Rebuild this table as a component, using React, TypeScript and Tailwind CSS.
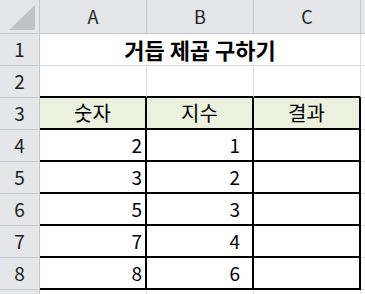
import React from 'react';

const COLS = ['A', 'B', 'C'];

const DATA: [number, number][] = [
  [2, 1],
  [3, 2],
  [5, 3],
  [7, 4],
  [8, 6],
];

const font = { fontFamily: '"Noto Sans CJK KR", "Noto Sans", sans-serif' };

const App: React.FC = () => {
  return (
    <div
      className="w-screen h-screen overflow-hidden bg-white text-black grid grid-cols-[40px_107px_107px_107px_1fr] grid-rows-[34px_repeat(8,32px)_1fr]"
      style={font}
    >
      {/* Corner */}
      <div className="bg-[#e4e6e9] border-r border-b border-[#c4c7cb] relative">
        <svg className="absolute left-0 top-0" width="40" height="34" viewBox="0 0 40 34">
          <polygon points="9,30 35,30 35,5" fill="#bfc2c6" />
        </svg>
      </div>

      {/* Column headers */}
      {COLS.map(c => (
        <div
          key={c}
          className="bg-[#e4e6e9] border-r border-b border-[#c4c7cb] flex items-center justify-center text-[18px] text-[#222]"
        >
          {c}
        </div>
      ))}
      <div className="bg-[#e4e6e9] border-b border-[#c4c7cb]" />

      {/* Row 1: title */}
      <div className="bg-[#e4e6e9] border-r border-b border-[#c4c7cb] flex items-center justify-center text-[19px] text-[#222]">1</div>
      <div className="col-span-3 border-r border-b border-[#dadada] flex items-center justify-center text-[22px] font-bold">
        거듭 제곱 구하기
      </div>
      <div className="border-b border-[#dadada]" />

      {/* Row 2 */}
      <div className="bg-[#e4e6e9] border-r border-b border-[#c4c7cb] flex items-center justify-center text-[19px] text-[#222]">2</div>
      {COLS.map(c => (
        <div key={c} className="border-r border-[#dadada] border-b-2 border-b-black" />
      ))}
      <div className="border-b border-[#dadada]" />

      {/* Row 3: table header */}
      <div className="bg-[#e4e6e9] border-r border-b border-[#c4c7cb] flex items-center justify-center text-[19px] text-[#222]">3</div>
      {['숫자', '지수', '결과'].map(h => (
        <div
          key={h}
          className="bg-[#ebf1de] border-r-2 border-b-2 border-black flex items-center justify-center text-[20px]"
        >
          {h}
        </div>
      ))}
      <div className="border-b border-[#dadada]" />

      {/* Rows 4-8 */}
      {DATA.map(([n, e], i) => (
        <React.Fragment key={i}>
          <div className="bg-[#e4e6e9] border-r border-b border-[#c4c7cb] flex items-center justify-center text-[19px] text-[#222]">
            {i + 4}
          </div>
          <div className="border-r-2 border-b-2 border-black flex items-center justify-end pr-[3px] text-[19px]">{n}</div>
          <div className="border-r-2 border-b-2 border-black flex items-center justify-end pr-[12px] text-[19px]">{e}</div>
          <div className="border-r-2 border-b-2 border-black" />
          <div className="border-b border-[#dadada]" />
        </React.Fragment>
      ))}

      {/* Row 9 (partially visible) */}
      <div className="bg-[#e4e6e9] border-r border-[#c4c7cb]" />
      <div className="border-r border-[#dadada]" />
      <div className="border-r border-[#dadada]" />
      <div className="border-r border-[#dadada]" />
      <div />
    </div>
  );
};

export default App;
